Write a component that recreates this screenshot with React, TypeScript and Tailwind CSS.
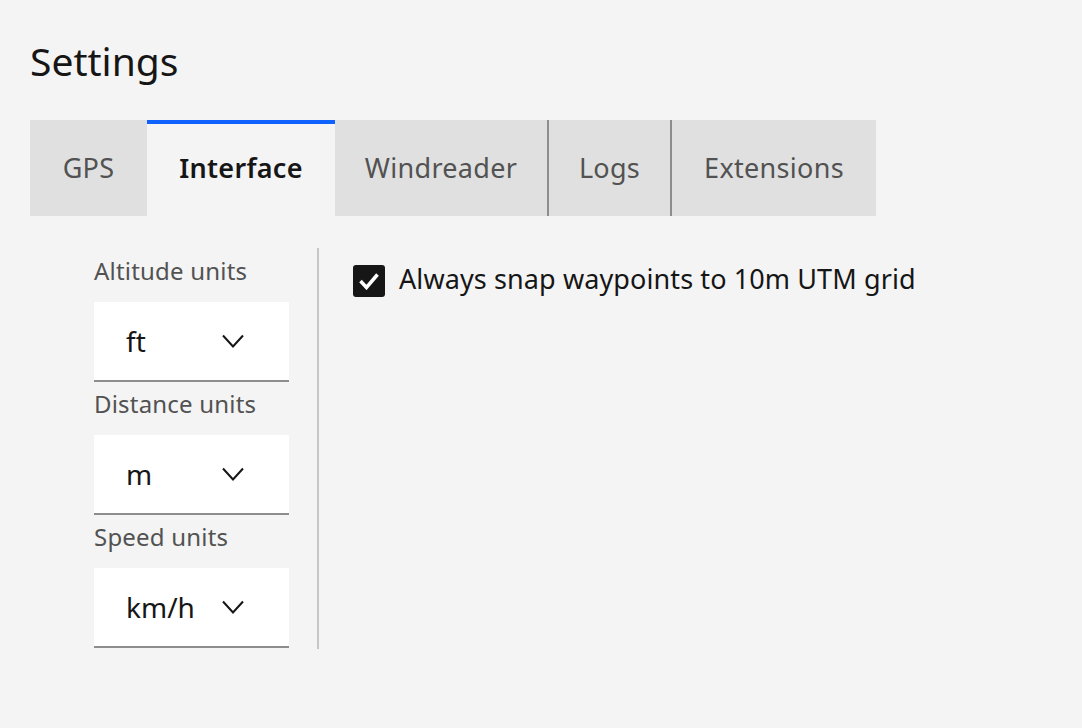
import { useState } from 'react';

const font = { fontFamily: '"Noto Sans", "Open Sans", sans-serif' };

const tabs = [
  { label: 'GPS', width: 'w-[117px]' },
  { label: 'Interface', width: 'w-[188px]' },
  { label: 'Windreader', width: 'w-[212px]' },
  { label: 'Logs', width: 'w-[121px]' },
  { label: 'Extensions', width: 'w-[204px]' },
];

const selects = [
  { label: 'Altitude units', value: 'ft' },
  { label: 'Distance units', value: 'm' },
  { label: 'Speed units', value: 'km/h' },
];

function Chevron() {
  return (
    <svg width="22" height="14" viewBox="0 0 22 14" fill="none" aria-hidden>
      <path d="M1 1.5 L11 12.5 L21 1.5" stroke="#161616" strokeWidth="2" />
    </svg>
  );
}

function UnitSelect({ label, value, first }: { label: string; value: string; first?: boolean }) {
  return (
    <div className="flex flex-col">
      <div
        className={`${first ? 'mt-[7px]' : 'mt-[6px]'} mb-[15px] h-[32px] text-[24px] leading-[32px] tracking-[0.2px] text-[#525252]`}
      >
        {label}
      </div>
      <div className="flex h-[80px] w-[195px] items-center justify-between border-b-2 border-[#8d8d8d] bg-white pl-[32px] pr-[45px]">
        <span className="text-[28px] text-[#161616]">{value}</span>
        <Chevron />
      </div>
    </div>
  );
}

export default function App() {
  const [active, setActive] = useState(1);
  const [snap, setSnap] = useState(true);

  return (
    <div className="min-h-screen w-full bg-[#f4f4f4] px-[30px] pt-[33px]" style={font}>
      <h1 className="h-[56px] text-[39px] font-normal leading-[56px] text-[#161616]">Settings</h1>

      <div className="mt-[31px] flex h-[96px]">
        {tabs.map((tab, i) => {
          const selected = i === active;
          const divider = i > 0 && !selected && i - 1 !== active;
          return (
            <div key={tab.label} className="flex">
              {divider && <div className="w-[2px] bg-[#8d8d8d]" />}
              <button
                onClick={() => setActive(i)}
                className={`${tab.width} flex h-full items-center justify-center text-[27px] tracking-[0.3px] ${
                  selected
                    ? 'border-t-4 border-[#0f62fe] bg-[#f4f4f4] pb-[4px] font-semibold text-[#161616]'
                    : 'bg-[#e0e0e0] text-[#525252]'
                }`}
              >
                {tab.label}
              </button>
            </div>
          );
        })}
      </div>

      <div className="mt-[32px] flex pl-[64px]">
        <div className="flex w-[195px] flex-col">
          {selects.map((s, i) => (
            <UnitSelect key={s.label} label={s.label} value={s.value} first={i === 0} />
          ))}
        </div>
        <div className="ml-[28px] h-[401px] w-[2px] bg-[#c6c6c6]" />
        <div className="ml-[34px] pt-[15px]">
          <label className="flex cursor-pointer items-center gap-[14px]">
            <span
              onClick={() => setSnap(!snap)}
              className="flex h-[32px] w-[32px] items-center justify-center rounded-[3px] bg-[#161616]"
            >
              {snap && (
                <svg width="22" height="18" viewBox="0 0 22 18" fill="none" aria-hidden>
                  <path d="M2.5 9 L8.5 15.5 L19.5 2.5" stroke="white" strokeWidth="3.5" />
                </svg>
              )}
            </span>
            <span className="-mt-[4px] text-[27px] tracking-[0.1px] text-[#161616]">
              Always snap waypoints to 10m UTM grid
            </span>
          </label>
        </div>
      </div>
    </div>
  );
}
